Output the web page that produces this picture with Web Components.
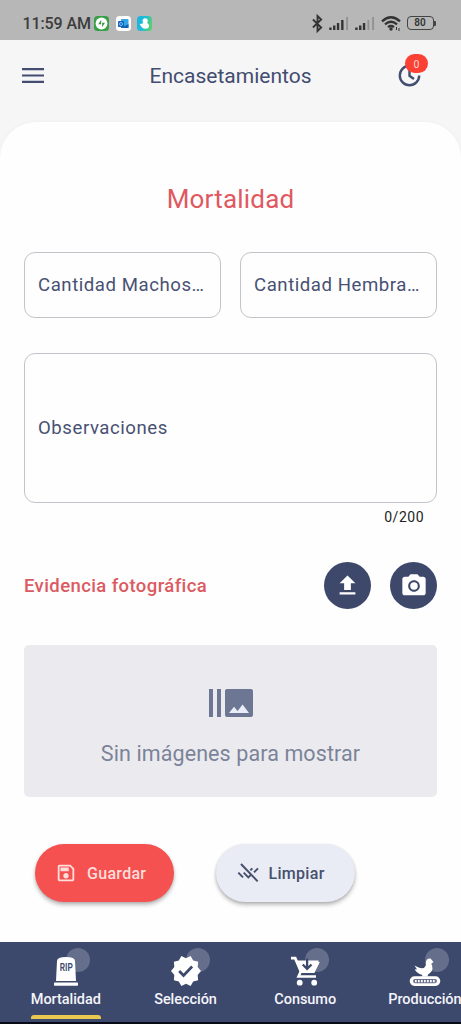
<!DOCTYPE html>
<html lang="es">
<head>
<meta charset="utf-8">
<title>Encasetamientos</title>
<style>
html,body{margin:0;padding:0;background:#fefefe;font-family:Roboto,"Liberation Sans",sans-serif}
</style>
</head>
<body>
<farm-app></farm-app>
<script>
const ICONS = {
  menu:['0 0 22 15','<path d="M0 1.200h22M0 7.500h22M0 13.800h22" stroke="currentColor" stroke-width="2.200"/>'],
  clock:['0 0 24 24','<path d="M12 2.700A9.300 9.300 0 1 0 21.300 12M12 6.500V12.300L16.300 15.300" fill="none" stroke="currentColor" stroke-width="2.300"/>'],
  upload:['0 0 24 24','<path fill="currentColor" d="M9 16h6v-6h4l-7-7-7 7h4zm-4 2h14v2H5z"/>'],
  camera:['0 0 24 24','<circle cx="12" cy="12" r="3.200" fill="currentColor"/><path fill="currentColor" d="M9 2 7.170 4H4c-1.100 0-2 .9-2 2v12c0 1.100.9 2 2 2h16c1.100 0 2-.9 2-2V6c0-1.100-.9-2-2-2h-3.170L15 2zm3 15c-2.760 0-5-2.240-5-5s2.240-5 5-5 5 2.240 5 5-2.240 5-5 5z"/>'],
  burst:['0 0 24 24','<path fill="currentColor" d="M1 5h2v14H1zm4 0h2v14H5zm17 0H10c-.55 0-1 .45-1 1v12c0 .55.45 1 1 1h12c.55 0 1-.45 1-1V6c0-.55-.45-1-1-1z"/><path fill="#e9edf7" d="m11 17 2.500-3.150L15.290 16l2.500-3.220L21 17z"/>'],
  save:['0 0 24 24','<path fill="currentColor" d="M17 3H5c-1.110 0-2 .9-2 2v14c0 1.100.89 2 2 2h14c1.100 0 2-.9 2-2V7zm2 16H5V5h11.170L19 7.830zm-7-7c-1.660 0-3 1.340-3 3s1.340 3 3 3 3-1.340 3-3-1.340-3-3-3zM6 6h9v4H6z"/>'],
  clear:['0 0 60 60','<path d="M9 3 59 55M1 29 15 43M17 29 31 43 40 34M48 28 60 16M37 22 43 16" fill="none" stroke="currentColor" stroke-width="6"/>'],
  rip:['0 0 24 30','<path fill="#fff" d="M2 25 3 5Q3 1 12 1t9 4l1 20z"/><rect y="26.500" width="24" height="3.300" rx=".7" fill="#fff"/><text x="12.300" y="14.500" text-anchor="middle" textLength="13" lengthAdjust="spacingAndGlyphs" font-family="Roboto" font-size="10.800" font-weight="600" fill="#3d486d">RIP</text>'],
  verified:['1 1.500 22 21','<path fill="#fff" d="m23 12-2.440-2.780.34-3.680-3.610-.82-1.890-3.180L12 3 8.600 1.540 6.710 4.720l-3.610.81.34 3.680L1 12l2.440 2.780-.34 3.690 3.610.82 1.890 3.180L12 21l3.400 1.460 1.890-3.180 3.610-.82-.34-3.680z"/><path d="m7 12 3.200 3.200 6.300-6.300" fill="none" stroke="#3d486d" stroke-width="2"/>'],
  cart:['0 0 30 30','<path d="M1 2.200H5.200L11 15.500H23.500L28.500 5.500" fill="none" stroke="#fff" stroke-width="2.800"/><path fill="#fff" d="M5.500 4.500H28.500L23.200 16.500H10.500z"/><path d="M17.100 2.500V12.500M12.700 8.500 17.100 12.900 21.500 8.500" fill="none" stroke="#3d486d" stroke-width="2.300"/><path d="M10.800 15.500 8.500 20.500H26" fill="none" stroke="#fff" stroke-width="2.600"/><circle cx="9.700" cy="26.700" r="2.900" fill="#fff"/><circle cx="24.200" cy="26.700" r="2.900" fill="#fff"/>'],
  hen:['0 0 32 28','<path fill="#fff" d="M5.500 7.500 9 9.200Q15 12 16.800 7.500V4.500Q17.500 0 21.500.6L24.500 4 22.300 5.800Q25 11 21.500 14.500L18.800 16.800V18.500H12.500L13.500 17Q7 15 5.800 11.200L8 11.500z"/><rect x="1.600" y="19.200" width="28.800" height="7.800" rx="3.900" fill="#fff" stroke="#fff" stroke-width="1.800"/><rect x="4" y="21" width="24" height="4.200" rx="2.100" fill="#69718e"/><path d="M6 23.100h20.500" stroke="#fff" stroke-width="2.200" stroke-dasharray="1.700 1.300"/>'],
  spark:['0 0 15 15','<rect width="15" height="15" rx="3.500" fill="#37a046"/><circle cx="7.500" cy="7.500" r="5.900" fill="#fff"/><path d="M7.300 3.800 4.200 8.300h2.700v2.300zM8 11.200l3-4.500H8.300V4.500z" fill="#35953f"/>'],
  mail:['0 0 15 15','<rect width="15" height="15" rx="3.500" fill="#fff"/><rect x="5" y="3" width="7.500" height="9" rx="1" fill="#35a6e8"/><path d="m5 8 4 2 3.500-2v4H5z" fill="#1764b5"/><rect x="2" y="5" width="6" height="6" rx=".7" fill="#1268bd"/><circle cx="5" cy="8" r="1.500" fill="none" stroke="#a3cdf2" stroke-width=".8"/>'],
  duo:['0 0 15 15','<defs><linearGradient id="g" x2="1" y2=".3"><stop stop-color="#18b4dd"/><stop offset=".55" stop-color="#20bddb"/><stop offset="1" stop-color="#55cf75"/></linearGradient></defs><rect width="15" height="15" rx="3.500" fill="url(#g)"/><circle cx="8.200" cy="4.800" r="2.600" fill="#fff"/><path d="M2.800 8Q5 8 6.500 6.800H10q4 3 .8 5.500-5.500 2-8-4.300z" fill="#fff"/>'],
  bluetooth:['0 0 12 17','<path d="m1 4.500 9 8L6 16V1l4 3.500-9 8" fill="none" stroke="currentColor" stroke-width="2"/>'],
  signal:['0 0 21 13','<path d="M1.500 10.500V13M5.500 8.500V13M9.500 6V13M14 3V13" stroke="currentColor" stroke-width="2.500"/><path d="M19 0V13" stroke="#929292" stroke-width="2"/>'],
  signal2:['0 0 21 13','<path d="M1.500 10.500V13M5.500 8.500V13M9.500 6V13" stroke="currentColor" stroke-width="2.500"/><path d="M14 3V13M19 0V13" stroke="#929292" stroke-width="2"/>'],
  wifi:['0 0 20 15','<path d="M1 5.300Q10-2.800 19 5.300M4 8.300q6-5 12 0M7 11.200q3-2.400 6 0" fill="none" stroke="currentColor" stroke-width="2.300"/><circle cx="10" cy="13" r="1.700" fill="currentColor"/><path d="M15.500 11v3M18 12v3" stroke="currentColor"/>']
};
class UiIcon extends HTMLElement{
  constructor(){super();this.attachShadow({mode:'open'})}
  connectedCallback(){
    const [box,art]=ICONS[this.getAttribute('name')];
    this.shadowRoot.innerHTML=`<style>:host{display:block;flex:none}svg{display:block;width:100%;height:100%;overflow:visible}</style><svg viewBox="${box}" preserveAspectRatio="none">${art}</svg>`;
  }
}
const define=(name,html)=>{
  const template=document.createElement('template');
  template.innerHTML=html;
  customElements.define(name,class extends HTMLElement{
    constructor(){super();this.attachShadow({mode:'open'}).append(template.content.cloneNode(true))}
  });
};
customElements.define('ui-icon',UiIcon);

define('status-bar',`<style>
:host{display:flex;align-items:center;height:40px;box-sizing:border-box;padding:6px 25px 0 22.500px;background:#b7b7b7;color:#333}
.time{font-size:16px;font-weight:500;line-height:20px;width:68.500px;margin-right:3px;padding-top:1px;white-space:nowrap;color:#3c3c3c;letter-spacing:-.1px}
.app{width:15px;height:15px;margin-right:6.500px}
.space{flex:1}
.bt{width:11px;height:17px;margin-right:6px}.sig{width:20px;height:13px;margin-right:6px}.wifi{width:20px;height:15px;margin-right:6px}
.bat{display:flex;align-items:center;justify-content:center;box-sizing:border-box;width:27px;height:14px;border:1.500px solid #444;border-radius:4px;font-size:10px;font-weight:600;line-height:12px}
.tip{width:2px;height:5px;background:#444;border-radius:0 1px 1px 0;margin-left:.5px}
</style><span class="time">11:59 AM</span><ui-icon class="app" name="spark"></ui-icon><ui-icon class="app" name="mail"></ui-icon><ui-icon class="app" name="duo"></ui-icon><span class="space"></span><ui-icon class="bt" name="bluetooth"></ui-icon><ui-icon class="sig" name="signal"></ui-icon><ui-icon class="sig" name="signal2"></ui-icon><ui-icon class="wifi" name="wifi"></ui-icon><span class="bat">80</span><span class="tip"></span>`);

define('app-header',`<style>
:host{display:grid;grid-template-columns:100px 1fr 100px;align-items:center;height:82px;box-sizing:border-box;padding-bottom:12px;color:#424d70}
.menu{width:22px;height:15px;margin-left:22px}
h1{margin:0;font-size:21px;font-weight:400;line-height:28px;text-align:center;padding-top:1px}
.act{position:relative;width:25px;height:25px;margin-left:36px}
.act ui-icon{width:25px;height:25px}
.badge{position:absolute;left:8px;top:-9px;width:23px;height:19px;border-radius:10px;background:#fb4034;color:#ffd9d5;font-size:10.500px;line-height:21px;text-align:center}
</style><ui-icon class="menu" name="menu"></ui-icon><h1><slot></slot></h1><div class="act"><ui-icon name="clock"></ui-icon><span class="badge">0</span></div>`);

define('text-box',`<style>
:host{display:flex;align-items:center;box-sizing:border-box;height:66px;min-width:0;padding:0 13px;border:1.300px solid #c2c4c9;border-radius:11px;color:#485173;font-size:18.600px;letter-spacing:.55px;line-height:24px;white-space:nowrap}
</style><span><slot></slot></span>`);

define('round-button',`<style>
:host{display:grid;place-items:center;width:47px;height:47px;border-radius:50%;background:#3d486b;color:#fff}
</style><slot></slot>`);

define('pill-button',`<style>
:host{display:flex;align-items:center;box-sizing:border-box;width:139px;height:58px;padding:0 var(--pad,20px);border-radius:29px;background:var(--fill);color:var(--ink);font-size:16px;font-weight:500;letter-spacing:.3px;box-shadow:0 3px 4px rgba(0,0,0,.24),0 1px 3px rgba(0,0,0,.12)}
.label{margin-left:var(--gap,10px)}
</style><slot name="icon"></slot><span class="label"><slot></slot></span>`);

define('nav-item',`<style>
:host{display:flex;flex-direction:column;align-items:center;flex:none;width:119.700px;height:80px;color:#f4f5fa}
.pic{position:relative;width:46px;height:44px;display:flex;justify-content:center;align-items:flex-end}
.dot{position:absolute;left:23px;top:6px;width:24px;height:24px;border-radius:50%;background:#656e8b}
.pic ::slotted(*){position:relative}
.label{font-size:14.500px;font-weight:500;line-height:20px;margin-top:4px;letter-spacing:-.05px;white-space:nowrap}
.line{width:70px;height:4px;border-radius:3px 3px 0 0;margin-top:5px;background:var(--line,transparent)}
</style><div class="pic"><i class="dot"></i><slot name="icon"></slot></div><span class="label"><slot></slot></span><span class="line"></span>`);

define('nav-bar',`<style>
:host{display:flex;height:82px;box-sizing:border-box;padding-left:6px;border-bottom:2px solid #080a18;background:#3d486d;overflow:hidden}
</style><slot></slot>`);

define('empty-gallery',`<style>
:host{display:flex;flex-direction:column;align-items:center;box-sizing:border-box;height:152px;padding-top:34px;border-radius:5px;background:#ebebef;color:#6d7793}
ui-icon{width:48px;height:48px}
p{margin:14px 0 0;font-size:21.500px;line-height:26px;letter-spacing:.1px;color:#7b8398;white-space:nowrap}
</style><ui-icon name="burst"></ui-icon><p><slot></slot></p>`);

define('farm-app',`<style>
:host{display:flex;flex-direction:column;width:461px;height:1024px;overflow:hidden;background:#f6f6f7}
main{flex:1;min-height:0;box-sizing:border-box;background:#fefefe;border-radius:36px 36px 0 0;padding:61px 24px 0;box-shadow:0 0 5px rgba(0,0,0,.035)}
h2{margin:0;text-align:center;font-size:26px;line-height:32px;font-weight:400;color:#e05860;letter-spacing:.2px}
.pair{display:grid;grid-template-columns:1fr 1fr;gap:19px;margin-top:37px}
.notes{height:150px;margin-top:35px}
.count{margin-top:4px;padding-right:13px;text-align:right;font-size:14px;line-height:20px;letter-spacing:.5px;color:#222}
.evidence{display:flex;align-items:center;gap:19px;margin-top:35px;height:47px}
h3{flex:1;margin:0;font-size:18.500px;font-weight:500;letter-spacing:.4px;color:#dc5a62;white-space:nowrap}
.up{width:27px;height:27px}.cam{width:28px;height:28px}
empty-gallery{margin-top:36px}
.actions{display:flex;gap:42px;margin-top:47px;padding-left:11px}
.red{--fill:#f55150;--ink:#ffdedb}.plain{--fill:#e9ebf5;--ink:#46506c;--gap:11px;--pad:21.500px}
.save{width:22px;height:22px}.clear{width:20px;height:20px}
.on{--line:#e8c84f}
</style>
<status-bar></status-bar>
<app-header>Encasetamientos</app-header>
<main>
<h2>Mortalidad</h2>
<div class="pair"><text-box>Cantidad Machos…</text-box><text-box>Cantidad Hembra…</text-box></div>
<text-box class="notes">Observaciones</text-box>
<div class="count">0/200</div>
<div class="evidence"><h3>Evidencia fotográfica</h3><round-button><ui-icon class="up" name="upload"></ui-icon></round-button><round-button><ui-icon class="cam" name="camera"></ui-icon></round-button></div>
<empty-gallery>Sin imágenes para mostrar</empty-gallery>
<div class="actions"><pill-button class="red"><ui-icon class="save" slot="icon" name="save"></ui-icon>Guardar</pill-button><pill-button class="plain"><ui-icon class="clear" slot="icon" name="clear"></ui-icon>Limpiar</pill-button></div>
</main>
<nav-bar>
<nav-item class="on"><ui-icon slot="icon" name="rip" style="width:24px;height:30px"></ui-icon>Mortalidad</nav-item>
<nav-item><ui-icon slot="icon" name="verified" style="width:30px;height:30px"></ui-icon>Selección</nav-item>
<nav-item><ui-icon slot="icon" name="cart" style="width:30px;height:30px"></ui-icon>Consumo</nav-item>
<nav-item><ui-icon slot="icon" name="hen" style="width:32px;height:28px"></ui-icon>Producción</nav-item>
</nav-bar>`);
</script>
</body>
</html>
